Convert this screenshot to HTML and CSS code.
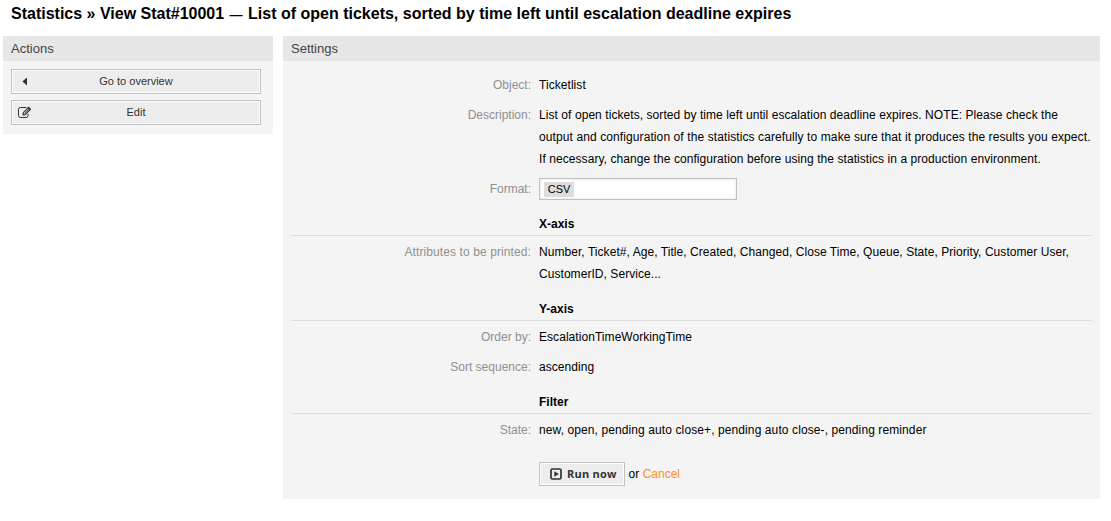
FILE: index.html
```html
<!DOCTYPE html>
<html lang="en">
<head>
<meta charset="utf-8">
<title>View Stat#10001</title>
<link rel="stylesheet" href="styles.css">
</head>
<body>
<h1 class="headline">Statistics » View Stat#10001 <span class="dash">—</span> List of open tickets, sorted by time left until escalation deadline expires</h1>
<div class="layout">
  <aside class="widget sidebar">
    <h2 class="widget-title">Actions</h2>
    <div class="actions">
      <a class="action"><svg class="icon" viewBox="0 0 16 16"><path d="M11 3.6v8L6.4 7.6z" fill="#333"/></svg><span class="action-label">Go to overview</span></a>
      <a class="action"><svg class="icon" viewBox="0 0 16 16" fill="none" stroke="#333"><path d="M10.4 2.5H4.4a1.9 1.9 0 0 0-1.9 1.9v6.2a1.9 1.9 0 0 0 1.9 1.9h5.7a1.9 1.9 0 0 0 1.9-1.9V8.8"/><path d="M7 9.9l.3-2.2 5-5.2 2 2-5.1 5.2z" stroke-width="1.2"/><path d="M8.5 8.5l4.3-4.3" stroke-width=".8"/><path d="M12.4 2.7l1.9 1.9" stroke-width="1.8"/></svg><span class="action-label">Edit</span></a>
    </div>
  </aside>
  <main class="widget content">
    <h2 class="widget-title">Settings</h2>
    <div class="form">
      <div class="row"><span class="label">Object:</span><div class="field">Ticketlist</div></div>
      <div class="row"><span class="label">Description:</span><div class="field description"><span>List of open tickets, sorted by time left until escalation deadline expires. NOTE: Please check the</span><span class="wide">output and configuration of the statistics carefully to make sure that it produces the results you expect.</span><span>If necessary, change the configuration before using the statistics in a production environment.</span></div></div>
      <div class="row"><span class="label">Format:</span><div class="field"><div class="select"><span class="tag">CSV</span></div></div></div>
      <h3 class="legend">X-axis</h3>
      <div class="row"><span class="label wide">Attributes to be printed:</span><div class="field">Number, Ticket#, Age, Title, Created, Changed, Close Time, Queue, State, Priority, Customer User,<br>CustomerID, Service...</div></div>
      <h3 class="legend">Y-axis</h3>
      <div class="row"><span class="label">Order by:</span><div class="field">EscalationTimeWorkingTime</div></div>
      <div class="row"><span class="label">Sort sequence:</span><div class="field">ascending</div></div>
      <h3 class="legend">Filter</h3>
      <div class="row"><span class="label">State:</span><div class="field wide">new, open, pending auto close+, pending auto close-, pending reminder</div></div>
      <div class="submit">
        <button class="run" type="button"><svg class="run-icon" viewBox="0 0 12 12"><rect x="1" y="1" width="10" height="10" rx="1.4" fill="none" stroke="#333" stroke-width="1.7"/><path d="M4.3 3.2v5.6L8.8 6z" fill="#333"/></svg><span>Run now</span></button>
        <span>or</span>
        <a class="cancel">Cancel</a>
      </div>
    </div>
  </main>
</div>
</body>
</html>
```

FILE: styles.css
```css
* { box-sizing: border-box; }
body {
  margin: 0;
  background: #fff;
  color: #000;
  font: 12px/22px "Liberation Sans", Arial, sans-serif;
}
h1, h2, h3 { margin: 0; }
.headline {
  height: 36px;
  padding: 3px 0 0 11px;
  font-size: 16px;
  white-space: nowrap;
}
.dash {
  display: inline-block;
  width: 15px;
  font-size: 13px;
  text-align: center;
}
.layout {
  display: flex;
  align-items: flex-start;
  gap: 10px;
  padding: 0 11px 0 3px;
}
.widget { background: #f4f4f4; }
.sidebar { flex: 0 0 270px; }
.content { flex: 1; }
.widget-title {
  height: 25px;
  padding-left: 8px;
  background: #e7e7e7;
  color: #444;
  font-size: 13px;
  font-weight: 400;
  line-height: 25px;
}
.actions {
  display: flex;
  flex-direction: column;
  gap: 6px;
  padding: 8px 12px 9px 8px;
}
.action {
  display: flex;
  align-items: center;
  height: 25px;
  padding-left: 4px;
  border: 1px solid #c1c1c1;
  box-shadow: inset 0 0 0 1px #fff;
  background: #ededed;
  color: #333;
  font-size: 11px;
  line-height: 22px;
}
.icon { width: 16px; height: 16px; }
.action-label { flex: 1; padding: 0 20px 1px 0; text-align: center; }
.form { padding: 13px 8px; }
.row { display: flex; gap: 8px; margin-bottom: 8px; }
.label { flex: 0 0 240px; color: #909090; text-align: right; white-space: nowrap; }
.field { letter-spacing: 0.055px; white-space: nowrap; }
.description { display: flex; flex-direction: column; letter-spacing: 0.068px; }
.wide { letter-spacing: 0.1px; }
.select {
  width: 198px;
  height: 22px;
  padding: 3px 4px;
  border: 1px solid #c1c1c1;
  background: #fff;
  box-shadow: inset 0 0 3px #ddd;
}
.tag {
  display: block;
  width: 30px;
  height: 15px;
  background: #ddd;
  font-size: 11px;
  letter-spacing: 0;
  line-height: 15px;
  text-align: center;
}
.legend {
  height: 23px;
  margin: 13px 0 5px;
  padding-left: 248px;
  border-bottom: 1px solid #ddd;
  font-size: 12px;
  line-height: 22px;
}
.submit {
  display: flex;
  align-items: center;
  gap: 3.5px;
  height: 24px;
  margin-top: 21px;
  padding-left: 248px;
}
.run {
  display: flex;
  align-items: center;
  gap: 5px;
  width: 86px;
  height: 24px;
  padding: 0 0 0 10px;
  border: 1px solid #c1c1c1;
  box-shadow: inset 0 0 0 1px #fff;
  background: #ededed;
  color: #333;
  font: bold 11px/22px "Open Sans", "Noto Sans", sans-serif;
  letter-spacing: 0.25px;
  white-space: nowrap;
}
.run-icon { flex: none; width: 12px; height: 12px; }
.cancel { color: #ff9022; }
```
